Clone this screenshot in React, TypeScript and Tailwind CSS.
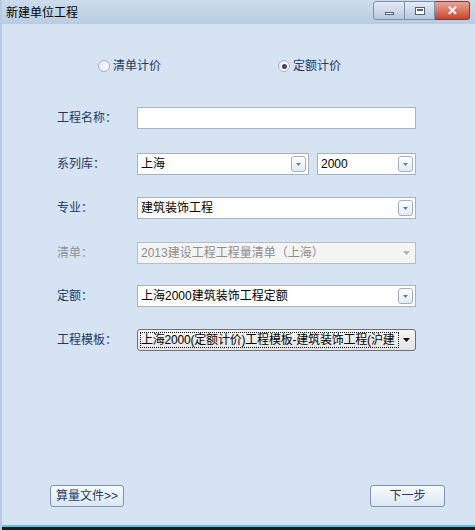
import React from 'react'

const font = { fontFamily: '"Liberation Sans", "Noto Sans CJK SC", sans-serif' }

function Arrow({ color = '#4a5a70' }: { color?: string }) {
    return (
        <svg width="7" height="4" viewBox="0 0 7 4">
            <path d="M0 0 L7 0 L3.5 4 Z" fill={color} />
        </svg>
    )
}

function DropBtn() {
    return (
        <div className="absolute right-[2px] top-[2px] w-[15px] h-[16px] rounded-[3px] border border-[#9db1ca] bg-linear-to-b from-white to-[#e2eaf4] flex items-center justify-center">
            <svg width="5" height="3" viewBox="0 0 5 3">
                <path d="M0 0 L5 0 L2.5 3 Z" fill="#6c7a8c" />
            </svg>
        </div>
    )
}

function Combo({ text, width, disabled }: { text: string; width: string; disabled?: boolean }) {
    return (
        <div className={`${width} ${disabled ? 'bg-[#f4f4f4] border-[#b8bdc3] text-[#8d8d8d]' : 'bg-white border-[#a7b2bf] text-black'} relative h-[22px] border flex items-center pl-[3px] text-[12px]`}>
            <span>{text}</span>
            {disabled ? (
                <div className="absolute right-[5px] top-[8px]">
                    <Arrow color="#b4b4b4" />
                </div>
            ) : (
                <DropBtn />
            )}
        </div>
    )
}

function Row({ label, gray, children, mt }: { label: string; gray?: boolean; children: React.ReactNode; mt: string }) {
    return (
        <div className={`${mt} flex items-center pl-[55px]`}>
            <div className={`w-[80px] text-[12px] ${gray ? 'text-[#8c939b]' : 'text-[#1e3a66]'}`}>{label}</div>
            {children}
        </div>
    )
}

function Radio({ checked, label }: { checked?: boolean; label: string }) {
    return (
        <div className="flex items-center gap-[3px]">
            <div className="w-[12px] h-[12px] rounded-full border border-[#a9b3bf] bg-linear-to-br from-[#e6e9ee] to-white flex items-center justify-center">
                {checked && <div className="w-[5px] h-[5px] rounded-full bg-[#3c4a60]" />}
            </div>
            <span className="text-[12px] text-[#1e3a66]">{label}</span>
        </div>
    )
}

export default function App() {
    return (
        <div className="w-[475px] h-[530px] bg-[#d5e3f2] flex flex-col border-l-[2px] border-[#b7cae0]" style={font}>
            {/* title bar */}
            <div className="h-[24px] flex items-start justify-between bg-linear-to-b from-[#cddcec] to-[#b9cce1] pl-[4px] pr-[5px]">
                <span className="mt-[4px] text-[12px] text-black">新建单位工程</span>
                <div className="flex mt-[1px]">
                    <div className="w-[32px] h-[19px] rounded-l-[3px] border border-[#7b90ab] bg-linear-to-b from-[#e4ecf5] to-[#b7c8dc] flex items-center justify-center">
                        <div className="w-[9px] h-[3px] border border-[#52627a] bg-white mt-[5px]" />
                    </div>
                    <div className="w-[30px] h-[19px] border border-l-0 border-[#7b90ab] bg-linear-to-b from-[#e4ecf5] to-[#b7c8dc] flex items-center justify-center">
                        <div className="w-[10px] h-[8px] border border-[#52627a] bg-white flex items-start justify-center">
                            <div className="w-[6px] h-[2px] bg-[#52627a] mt-[1px]" />
                        </div>
                    </div>
                    <div className="w-[35px] h-[19px] rounded-r-[3px] border border-l-0 border-[#8a3a2e] bg-linear-to-b from-[#e8a594] to-[#c5432e] flex items-center justify-center">
                        <span className="text-white text-[13px] font-bold leading-none">✕</span>
                    </div>
                </div>
            </div>

            {/* pricing mode */}
            <div className="mt-[34px] h-[16px] flex items-center pl-[96px] gap-[117px]">
                <Radio label="清单计价" />
                <Radio checked label="定额计价" />
            </div>

            <Row label="工程名称：" mt="mt-[33px]">
                <div className="w-[279px] h-[22px] bg-white border border-[#a7b2bf]" />
            </Row>

            <Row label="系列库：" mt="mt-[24px]">
                <Combo text="上海" width="w-[172px]" />
                <div className="w-[8px]" />
                <Combo text="2000" width="w-[99px]" />
            </Row>

            <Row label="专业：" mt="mt-[22px]">
                <Combo text="建筑装饰工程" width="w-[279px]" />
            </Row>

            <Row label="清单：" gray mt="mt-[23px]">
                <Combo text="2013建设工程工程量清单（上海）" width="w-[279px]" disabled />
            </Row>

            <Row label="定额：" mt="mt-[21px]">
                <Combo text="上海2000建筑装饰工程定额" width="w-[279px]" />
            </Row>

            <Row label="工程模板：" mt="mt-[22px]">
                <div className="relative w-[279px] h-[22px] rounded-[3px] border border-[#707070] bg-linear-to-b from-[#f6f6f6] to-[#e4e4e4] flex items-center pl-[2px] pr-[16px]">
                    <div className="flex-1 h-[16px] border border-dotted border-black flex items-center overflow-hidden whitespace-nowrap text-[12px] tracking-[-0.2px] text-black">
                        上海2000(定额计价)工程模板-建筑装饰工程(沪建
                    </div>
                    <div className="absolute right-[5px] top-[8px]">
                        <Arrow color="#111" />
                    </div>
                </div>
            </Row>

            <div className="flex-1" />

            {/* bottom buttons */}
            <div className="flex justify-between pl-[48px] pr-[30px]">
                <div className="w-[74px] h-[22px] rounded-[3px] border border-[#7d93b1] bg-linear-to-b from-[#f8fbfe] to-[#dbe6f3] flex items-center justify-center text-[12px] text-[#1e3a66]">
                    算量文件&gt;&gt;
                </div>
                <div className="w-[75px] h-[22px] rounded-[3px] border border-[#7d93b1] bg-linear-to-b from-[#f8fbfe] to-[#dbe6f3] flex items-center justify-center text-[12px] text-[#1e3a66]">
                    下一步
                </div>
            </div>

            <div className="h-[18px]" />
            <div className="h-[2px] bg-[#5cc3e3]" />
            <div className="h-[3px] bg-[#1b1b1b]" />
        </div>
    )
}
